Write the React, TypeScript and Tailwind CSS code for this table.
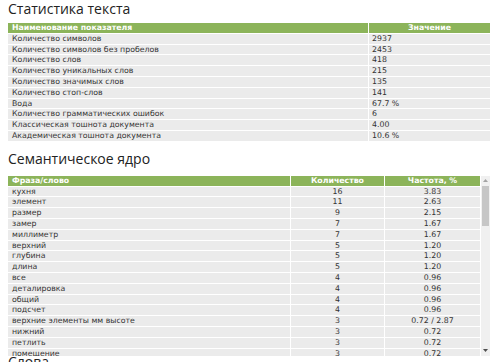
import React from "react";

const stats: [string, string][] = [
  ["Количество символов", "2937"],
  ["Количество символов без пробелов", "2453"],
  ["Количество слов", "418"],
  ["Количество уникальных слов", "215"],
  ["Количество значимых слов", "135"],
  ["Количество стоп-слов", "141"],
  ["Вода", "67.7 %"],
  ["Количество грамматических ошибок", "6"],
  ["Классическая тошнота документа", "4.00"],
  ["Академическая тошнота документа", "10.6 %"],
];

const core: [string, string, string][] = [
  ["кухня", "16", "3.83"],
  ["элемент", "11", "2.63"],
  ["размер", "9", "2.15"],
  ["замер", "7", "1.67"],
  ["миллиметр", "7", "1.67"],
  ["верхний", "5", "1.20"],
  ["глубина", "5", "1.20"],
  ["длина", "5", "1.20"],
  ["все", "4", "0.96"],
  ["деталировка", "4", "0.96"],
  ["общий", "4", "0.96"],
  ["подсчет", "4", "0.96"],
  ["верхние элементы мм высоте", "3", "0.72 / 2.87"],
  ["нижний", "3", "0.72"],
  ["петлить", "3", "0.72"],
  ["помещение", "3", "0.72"],
];

const cell = "h-[9.8px] bg-[#ebebeb] text-[#333] text-[7.8px] leading-[10.4px] whitespace-nowrap overflow-hidden";
const head = "h-[9.8px] bg-[#8cb45a] text-white font-bold text-[7.8px] leading-[10.4px] whitespace-nowrap overflow-hidden";
const titleFont = { fontFamily: '"Open Sans", sans-serif' };

export default function App() {
  return (
    <div
      className="w-[499px] h-[362px] overflow-hidden bg-white pl-[8px] pr-[9px]"
      style={{ fontFamily: '"DejaVu Sans", Verdana, sans-serif' }}
    >
      <h1 className="h-[23px] text-[14px] leading-[17px] text-[#222]" style={titleFont}>
        Статистика текста
      </h1>
      <div className="grid grid-cols-[360px_121px] gap-px">
        <div className={`${head} pl-[4px]`}>Наименование показателя</div>
        <div className={`${head} text-center`}>Значение</div>
        {stats.map(([k, v]) => (
          <React.Fragment key={k}>
            <div className={`${cell} pl-[4px]`}>{k}</div>
            <div className={`${cell} pl-[3px]`}>{v}</div>
          </React.Fragment>
        ))}
      </div>
      <h2 className="h-[35px] pt-[9px] text-[14px] leading-[17px] text-[#222]" style={titleFont}>
        Семантическое ядро
      </h2>
      <div className="flex h-[180px] gap-px">
        <div className="h-full overflow-hidden">
          <div className="grid grid-cols-[282px_93px_95px] gap-px">
            <div className={`${head} pl-[4px]`}>Фраза/слово</div>
            <div className={`${head} text-center`}>Количество</div>
            <div className={`${head} text-center`}>Частота, %</div>
            {core.map(([w, n, f]) => (
              <React.Fragment key={w}>
                <div className={`${cell} pl-[4px]`}>{w}</div>
                <div className={`${cell} text-center`}>{n}</div>
                <div className={`${cell} text-center`}>{f}</div>
              </React.Fragment>
            ))}
          </div>
        </div>
        <div className="flex h-full w-[9px] flex-col bg-[#f0f0f0]">
          <div className="flex h-[10px] items-center justify-center">
            <svg width="5" height="3" viewBox="0 0 5 3">
              <path d="M0 3 L2.5 0 L5 3 Z" fill="#a3a3a3" />
            </svg>
          </div>
          <div className="mx-[1px] h-[40px] bg-[#c6c6c6]" />
          <div className="flex-1" />
          <div className="flex h-[10px] items-center justify-center">
            <svg width="5" height="3" viewBox="0 0 5 3">
              <path d="M0 0 L2.5 3 L5 0 Z" fill="#505050" />
            </svg>
          </div>
        </div>
      </div>
      <h2 className="h-[24px] text-[14px] leading-[12px] text-[#222]" style={titleFont}>
        Слова
      </h2>
    </div>
  );
}
